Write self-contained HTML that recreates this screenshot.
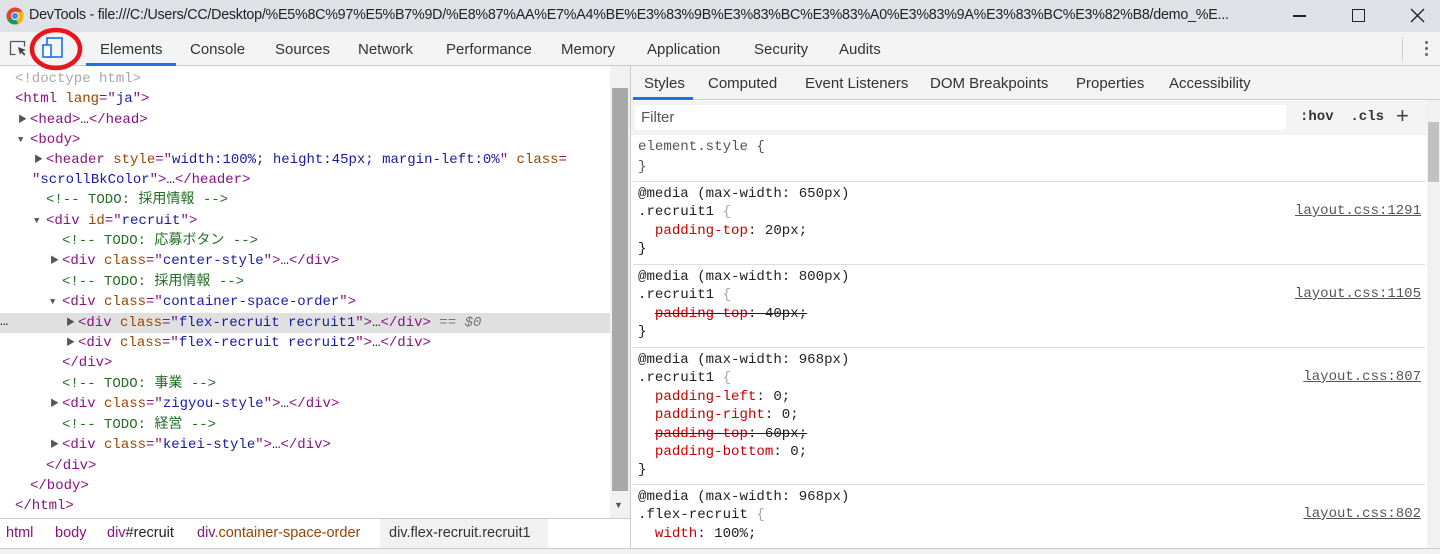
<!DOCTYPE html>
<html><head><meta charset="utf-8"><style>
*{margin:0;padding:0;box-sizing:border-box}
body{width:1440px;height:554px;overflow:hidden;background:#fff;font-family:"Liberation Sans","Noto Sans CJK JP",sans-serif;position:relative}
.abs{position:absolute}
.mono{font-family:"Liberation Mono","Noto Sans CJK JP",monospace}
.tb{top:0;left:0;width:1440px;height:32px;background:#dee1e6}
.tabs{top:32px;left:0;width:1440px;height:34px;background:#f3f3f3;border-bottom:1px solid #ccc}
.tab{position:absolute;top:41px;font-size:15px;color:#333}
.el{position:absolute;font-size:14px;white-space:pre;line-height:20px;height:20px}
.t{color:#881280}.a{color:#994500}.v{color:#1a1aa6}.c{color:#236e25}.g{color:#a8a8a8}.k{color:#222}
.ar{color:#555;font-size:9px;display:inline-block;width:12px;vertical-align:1px}
.st{position:absolute;font-size:14.1px;white-space:pre;line-height:18px;color:#222;left:638px}
.p{color:#c80000}
.s{text-decoration:line-through;text-decoration-color:#222}
.lk{position:absolute;font-size:14px;color:#555;text-decoration:underline;right:19px}
.sep{position:absolute;left:633px;width:792px;height:1px;background:#ddd}
</style></head><body>
<div class="abs tb"></div>
<svg class="abs" style="left:6px;top:7px" width="18" height="18" viewBox="0 0 18 18"><circle cx="9" cy="9" r="8.5" fill="#db4437"/><path d="M9 9 L1.6 13.2 A8.5 8.5 0 0 0 12 17 Z" fill="#0f9d58"/><path d="M9 9 L12 17 A8.5 8.5 0 0 0 16.4 4.8 L9 4.8Z" fill="#f4b400"/><circle cx="9" cy="9" r="4" fill="#fff"/><circle cx="9" cy="9" r="3.1" fill="#4285f4"/></svg>
<div class="abs" style="left:29px;top:7px;width:1245px;overflow:hidden;font-size:14.3px;letter-spacing:-0.25px;color:#222;white-space:nowrap">DevTools - file:///C:/Users/CC/Desktop/%E5%8C%97%E5%B7%9D/%E8%87%AA%E7%A4%BE%E3%83%9B%E3%83%BC%E3%83%A0%E3%83%9A%E3%83%BC%E3%82%B8/demo_%E...</div>
<div class="abs" style="left:1293px;top:15px;width:13px;height:1.5px;background:#222"></div>
<div class="abs" style="left:1352px;top:9px;width:13px;height:13px;border:1.5px solid #222"></div>
<svg class="abs" style="left:1410px;top:8px" width="15" height="15"><path d="M1 1L14 14M14 1L1 14" stroke="#222" stroke-width="1.4"/></svg>
<div class="abs tabs"></div>
<svg class="abs" style="left:9px;top:40px" width="20" height="18"><path d="M1.5 1.5h14v5M1.5 1.5v13h5" fill="none" stroke="#555" stroke-width="1.3"/><path d="M9 7l8 3-3.5 1.2 3 3.2-1.3 1.2-3-3.2L11 15z" fill="#444"/></svg>
<svg class="abs" style="left:42px;top:37px" width="22" height="22"><rect x="5" y="1" width="15" height="19" fill="none" stroke="#1a73e8" stroke-width="1.6"/><rect x="1" y="8" width="8" height="12" fill="#fff" stroke="#1a73e8" stroke-width="1.6"/></svg>
<svg class="abs" style="left:29px;top:27px" width="56" height="44"><ellipse cx="27" cy="22" rx="24" ry="19" fill="none" stroke="#e8141e" stroke-width="4.5"/></svg>
<div class="tab" style="left:100px">Elements</div>
<div class="abs" style="left:86px;top:63px;width:90px;height:3px;background:#1a73e8"></div>
<div class="tab" style="left:190px">Console</div>
<div class="tab" style="left:275px">Sources</div>
<div class="tab" style="left:358px">Network</div>
<div class="tab" style="left:446px">Performance</div>
<div class="tab" style="left:561px">Memory</div>
<div class="tab" style="left:647px">Application</div>
<div class="tab" style="left:754px">Security</div>
<div class="tab" style="left:839px">Audits</div>
<div class="abs" style="left:1402px;top:37px;width:1px;height:24px;background:#ccc"></div>
<div class="abs" style="left:1425px;top:41px;width:3px;height:3px;border-radius:2px;background:#666;box-shadow:0 6px #666,0 12px #666"></div>

<!-- elements -->
<div class="abs" style="left:0;top:313px;width:610px;height:20px;background:#e0e0e0"></div>
<div class="mono">
<div class="el g" style="left:15px;top:69px">&lt;!doctype html&gt;</div>
<div class="el" style="left:15px;top:89px"><span class="t">&lt;html</span> <span class="a">lang</span><span class="t">="</span><span class="v">ja</span><span class="t">"&gt;</span></div>
<div class="el" style="left:18px;top:110px"><span class="ar">▶</span><span class="t">&lt;head&gt;</span><span class="k">…</span><span class="t">&lt;/head&gt;</span></div>
<div class="el" style="left:18px;top:130px"><span class="ar">▼</span><span class="t">&lt;body&gt;</span></div>
<div class="el" style="left:34px;top:150px"><span class="ar">▶</span><span class="t">&lt;header</span> <span class="a">style</span><span class="t">="</span><span class="v">width:100%; height:45px; margin-left:0%</span><span class="t">"</span> <span class="a">class</span><span class="t">=</span></div>
<div class="el" style="left:32px;top:170px"><span class="t">"</span><span class="v">scrollBkColor</span><span class="t">"&gt;</span><span class="k">…</span><span class="t">&lt;/header&gt;</span></div>
<div class="el c" style="left:46px;top:190px">&lt;!-- TODO: 採用情報 --&gt;</div>
<div class="el" style="left:34px;top:211px"><span class="ar">▼</span><span class="t">&lt;div</span> <span class="a">id</span><span class="t">="</span><span class="v">recruit</span><span class="t">"&gt;</span></div>
<div class="el c" style="left:62px;top:231px">&lt;!-- TODO: 応募ボタン --&gt;</div>
<div class="el" style="left:50px;top:251px"><span class="ar">▶</span><span class="t">&lt;div</span> <span class="a">class</span><span class="t">="</span><span class="v">center-style</span><span class="t">"&gt;</span><span class="k">…</span><span class="t">&lt;/div&gt;</span></div>
<div class="el c" style="left:62px;top:272px">&lt;!-- TODO: 採用情報 --&gt;</div>
<div class="el" style="left:50px;top:292px"><span class="ar">▼</span><span class="t">&lt;div</span> <span class="a">class</span><span class="t">="</span><span class="v">container-space-order</span><span class="t">"&gt;</span></div>
<div class="el k" style="left:0px;top:312px">…</div>
<div class="el" style="left:66px;top:313px"><span class="ar">▶</span><span class="t">&lt;div</span> <span class="a">class</span><span class="t">="</span><span class="v">flex-recruit recruit1</span><span class="t">"&gt;</span><span class="k">…</span><span class="t">&lt;/div&gt;</span> <span style="color:#777">== <i>$0</i></span></div>
<div class="el" style="left:66px;top:333px"><span class="ar">▶</span><span class="t">&lt;div</span> <span class="a">class</span><span class="t">="</span><span class="v">flex-recruit recruit2</span><span class="t">"&gt;</span><span class="k">…</span><span class="t">&lt;/div&gt;</span></div>
<div class="el t" style="left:62px;top:353px">&lt;/div&gt;</div>
<div class="el c" style="left:62px;top:374px">&lt;!-- TODO: 事業 --&gt;</div>
<div class="el" style="left:50px;top:394px"><span class="ar">▶</span><span class="t">&lt;div</span> <span class="a">class</span><span class="t">="</span><span class="v">zigyou-style</span><span class="t">"&gt;</span><span class="k">…</span><span class="t">&lt;/div&gt;</span></div>
<div class="el c" style="left:62px;top:415px">&lt;!-- TODO: 経営 --&gt;</div>
<div class="el" style="left:50px;top:435px"><span class="ar">▶</span><span class="t">&lt;div</span> <span class="a">class</span><span class="t">="</span><span class="v">keiei-style</span><span class="t">"&gt;</span><span class="k">…</span><span class="t">&lt;/div&gt;</span></div>
<div class="el t" style="left:46px;top:456px">&lt;/div&gt;</div>
<div class="el t" style="left:30px;top:476px">&lt;/body&gt;</div>
<div class="el t" style="left:15px;top:496px">&lt;/html&gt;</div>
</div>
<div class="abs" style="left:610px;top:66px;width:20px;height:452px;background:#f1f1f1"></div>
<div class="abs" style="left:612px;top:88px;width:16px;height:403px;background:#a8a8a8"></div>
<div class="abs" style="left:614px;top:500px;font-size:9px;color:#555">▼</div>
<div class="abs" style="left:630px;top:66px;width:1px;height:488px;background:#ccc"></div>
<div class="abs" style="left:0;top:518px;width:630px;height:1px;background:#ccc"></div>
<div class="abs" style="left:0;top:519px;width:630px;height:29px;background:#fff;font-size:14.5px;white-space:nowrap">
<span class="abs" style="left:380px;top:0;width:168px;height:29px;background:#f1f1f1"></span>
<span class="abs" style="left:6px;top:6px;color:#881280">html</span>
<span class="abs" style="left:55px;top:6px;color:#881280">body</span>
<span class="abs" style="left:107px;top:6px;color:#881280">div<span style="color:#222">#recruit</span></span>
<span class="abs" style="left:197px;top:6px;color:#881280">div<span style="color:#994500">.container-space-order</span></span>
<span class="abs" style="left:389px;top:6px;color:#333">div.flex-recruit.recruit1</span>
</div>
<div class="abs" style="left:0;top:548px;width:1440px;height:6px;background:#f1f1f1;border-top:1px solid #ccc"></div>

<!-- styles -->
<div class="abs" style="left:631px;top:66px;width:809px;height:34px;background:#f3f3f3;border-bottom:1px solid #ccc"></div>
<div class="abs" style="top:75px;left:644px;font-size:15px;color:#333;white-space:nowrap">Styles</div>
<div class="abs" style="left:633px;top:97px;width:60px;height:3px;background:#1a73e8"></div>
<div class="abs" style="top:75px;left:708px;font-size:15px;color:#333">Computed</div>
<div class="abs" style="top:75px;left:805px;font-size:15px;color:#333">Event Listeners</div>
<div class="abs" style="top:75px;left:930px;font-size:15px;color:#333">DOM Breakpoints</div>
<div class="abs" style="top:75px;left:1076px;font-size:15px;color:#333">Properties</div>
<div class="abs" style="top:75px;left:1169px;font-size:15px;color:#333">Accessibility</div>
<div class="abs" style="left:631px;top:101px;width:796px;height:34px;background:#f3f3f3"></div>
<div class="abs" style="left:635px;top:105px;width:651px;height:25px;background:#fff"></div>
<div class="abs" style="left:641px;top:109px;font-size:15px;color:#555">Filter</div>
<div class="abs mono" style="left:1300px;top:109px;font-size:14px;color:#333;font-weight:bold;white-space:pre">:hov  .cls</div>
<div class="abs" style="left:1396px;top:103px;font-size:22px;color:#444">+</div>
<div class="abs" style="left:1427px;top:100px;width:13px;height:448px;background:#f1f1f1"></div>
<div class="abs" style="left:1428px;top:122px;width:11px;height:60px;background:#c1c1c1"></div>
<div class="mono">
<div class="st" style="top:138px;color:#555">element.style {</div>
<div class="st" style="top:158px;color:#555">}</div>
<div class="sep" style="top:181px"></div>
<div class="st" style="top:185px">@media (max-width: 650px)</div>
<div class="st" style="top:203px">.recruit1 <span class="g">{</span></div>
<div class="lk" style="top:203px">layout.css:1291</div>
<div class="st" style="top:222px">  <span class="p">padding-top</span>: 20px;</div>
<div class="st" style="top:240px">}</div>
<div class="sep" style="top:264px"></div>
<div class="st" style="top:268px">@media (max-width: 800px)</div>
<div class="st" style="top:286px">.recruit1 <span class="g">{</span></div>
<div class="lk" style="top:286px">layout.css:1105</div>
<div class="st" style="top:305px">  <span class="s"><span class="p">padding-top</span>: 40px;</span></div>
<div class="st" style="top:323px">}</div>
<div class="sep" style="top:347px"></div>
<div class="st" style="top:351px">@media (max-width: 968px)</div>
<div class="st" style="top:369px">.recruit1 <span class="g">{</span></div>
<div class="lk" style="top:369px">layout.css:807</div>
<div class="st" style="top:388px">  <span class="p">padding-left</span>: 0;</div>
<div class="st" style="top:406px">  <span class="p">padding-right</span>: 0;</div>
<div class="st" style="top:425px">  <span class="s"><span class="p">padding-top</span>: 60px;</span></div>
<div class="st" style="top:443px">  <span class="p">padding-bottom</span>: 0;</div>
<div class="st" style="top:461px">}</div>
<div class="sep" style="top:484px"></div>
<div class="st" style="top:488px">@media (max-width: 968px)</div>
<div class="st" style="top:506px">.flex-recruit <span class="g">{</span></div>
<div class="lk" style="top:506px">layout.css:802</div>
<div class="st" style="top:525px">  <span class="p">width</span>: 100%;</div>
</div>
<div class="abs" style="left:631px;top:548px;width:809px;height:6px;background:#f1f1f1;border-top:1px solid #ccc"></div>
</body></html>
